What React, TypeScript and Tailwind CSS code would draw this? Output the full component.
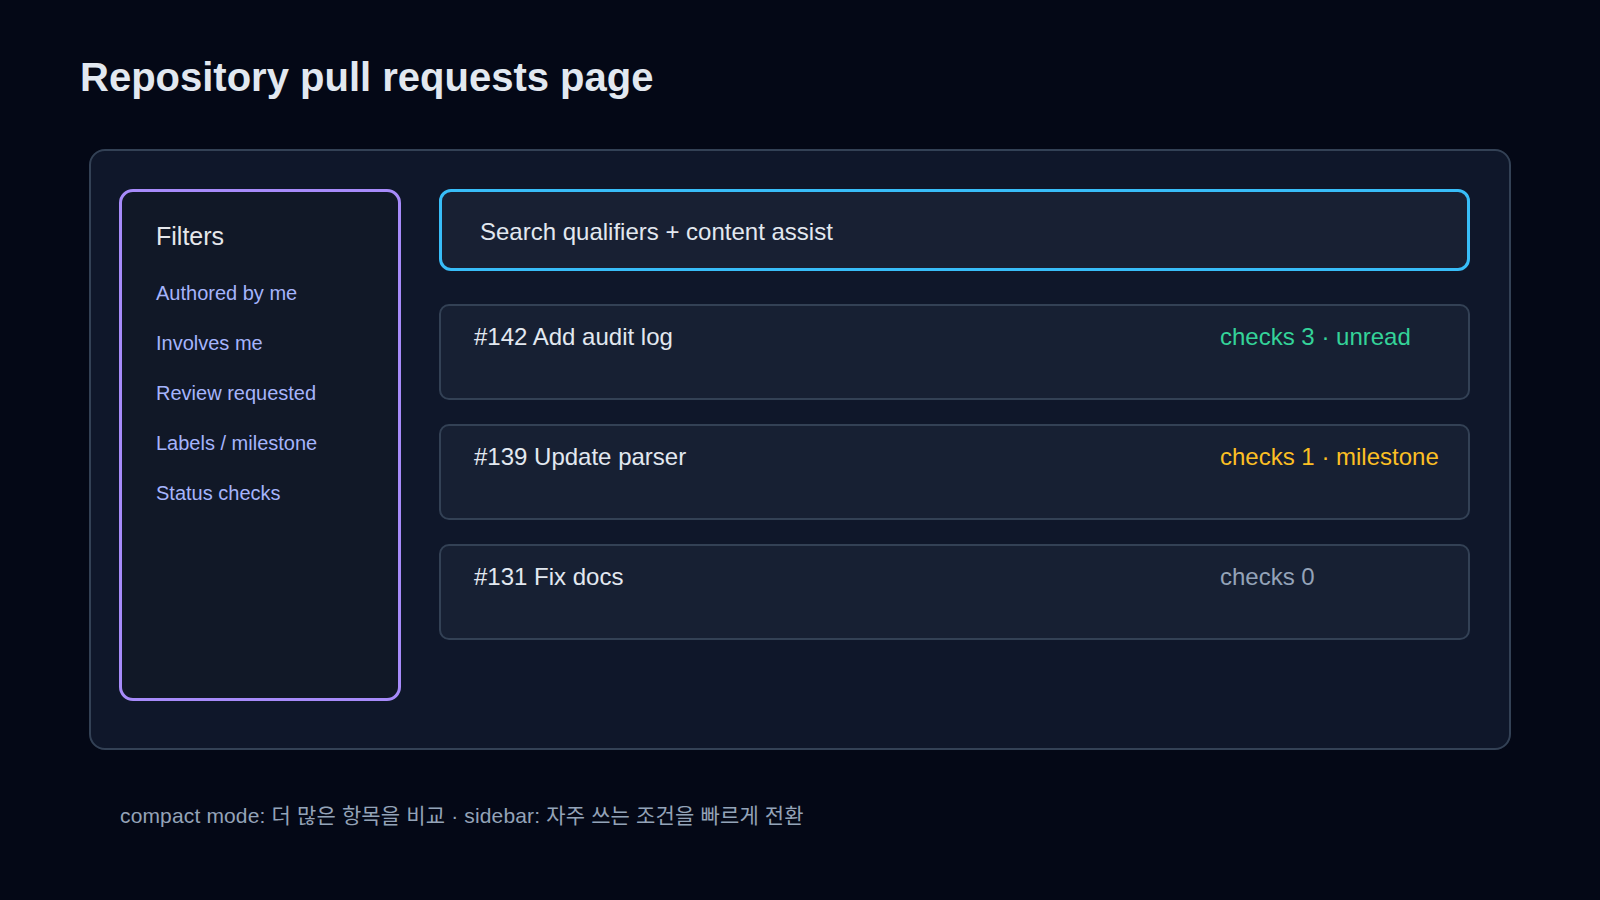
const filters = ["Authored by me", "Involves me", "Review requested", "Labels / milestone", "Status checks"];

type PullRow = {
  id: number;
  title: string;
  status: string;
  tone: "green" | "amber" | "muted";
};

const pulls: PullRow[] = [
  { id: 142, title: "Add audit log", status: "checks 3 · unread", tone: "green" },
  { id: 139, title: "Update parser", status: "checks 1 · milestone", tone: "amber" },
  { id: 131, title: "Fix docs", status: "checks 0", tone: "muted" },
];

const toneClass = {
  green: "text-[#34d399]",
  amber: "text-[#fbbf24]",
  muted: "text-[#94a3b8]",
};

export default function App() {
  return (
    <div className="min-h-screen bg-[#040816] px-[80px] pt-[55px] font-[family-name:'Liberation_Sans','Noto_Sans_CJK_KR',sans-serif]">
      <h1 className="text-[40px] font-bold leading-[45px] text-[#e2e8f0]">Repository pull requests page</h1>

      <div className="mt-[49px] ml-[9px] flex h-[601px] w-[1422px] gap-[38px] rounded-[16px] border-2 border-[#334155] bg-[#0f172a] pl-[28px] pr-[39px] pt-[38px]">
        {/* filter sidebar */}
        <aside className="h-[512px] w-[282px] shrink-0 rounded-[14px] border-[3px] border-[#a78bfa] bg-[#111827] pl-[34px] pt-[29px]">
          <h2 className="text-[25px] leading-[30px] text-[#e5e7eb]">Filters</h2>
          <ul className="mt-[30px] flex flex-col gap-[26px]">
            {filters.map((f) => (
              <li key={f} className="text-[20px] leading-[24px] text-[#a5b4fc]">
                {f}
              </li>
            ))}
          </ul>
        </aside>

        <div className="flex-1">
          <div className="flex h-[82px] items-center rounded-[12px] border-[3px] border-[#38bdf8] bg-[#182033] pl-[38px] pt-[4px] text-[24px] text-[#e2e8f0]">
            Search qualifiers + content assist
          </div>

          <div className="mt-[33px] flex flex-col gap-[24px]">
            {pulls.map((p) => (
              <div
                key={p.id}
                className="flex h-[96px] items-start justify-between rounded-[10px] border-2 border-[#334155] bg-[#172033] pl-[33px] pr-[30px] pt-[17px] text-[24px] leading-[28px]"
              >
                <span className="text-[#e2e8f0]">
                  #{p.id} {p.title}
                </span>
                <span className={`w-[218px] whitespace-nowrap ${toneClass[p.tone]}`}>{p.status}</span>
              </div>
            ))}
          </div>
        </div>
      </div>

      <p className="ml-[40px] mt-[53px] text-[21px] leading-[25px] tracking-[0.15px] text-[#94a3b8]">
        compact mode: 더 많은 항목을 비교 · sidebar: 자주 쓰는 조건을 빠르게 전환
      </p>
    </div>
  );
}
